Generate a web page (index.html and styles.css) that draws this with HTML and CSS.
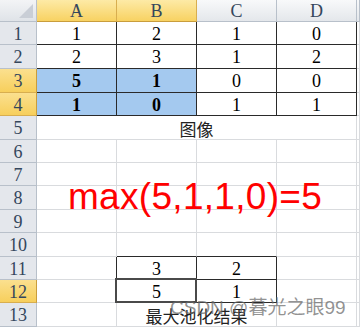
FILE: index.html
```html
<!DOCTYPE html>
<html lang="zh">
<head>
<meta charset="utf-8">
<title>Sheet</title>
<link rel="stylesheet" href="styles.css">
</head>
<body>
<div class="sheet">
  <div class="corner"><svg class="tri" width="14" height="14" viewBox="0 0 14 14"><polygon points="14,0 14,14 0,14" fill="#c9ced6"/></svg></div>
  <div class="h hs">A</div>
  <div class="h hs">B</div>
  <div class="h">C</div>
  <div class="h">D</div>
  <div class="h"></div>

  <div class="r">1</div>
  <div class="c bk">1</div><div class="c bk">2</div><div class="c bk">1</div><div class="c bk">0</div><div class="c"></div>

  <div class="r">2</div>
  <div class="c bk">2</div><div class="c bk">3</div><div class="c bk">1</div><div class="c bk">2</div><div class="c"></div>

  <div class="r rs">3</div>
  <div class="c bk sel">5</div><div class="c bk sel">1</div><div class="c bk">0</div><div class="c bk">0</div><div class="c"></div>

  <div class="r rs">4</div>
  <div class="c bk sel">1</div><div class="c bk sel">0</div><div class="c bk">1</div><div class="c bk">1</div><div class="c"></div>

  <div class="r">5</div>
  <div class="c span4 cjk">图像</div><div class="c"></div>

  <div class="r">6</div>
  <div class="c"></div><div class="c"></div><div class="c"></div><div class="c"></div><div class="c"></div>

  <div class="r">7</div>
  <div class="c"></div><div class="c"></div><div class="c"></div><div class="c"></div><div class="c"></div>

  <div class="r">8</div>
  <div class="c"></div><div class="c"></div><div class="c"></div><div class="c"></div><div class="c"></div>

  <div class="r">9</div>
  <div class="c"></div><div class="c"></div><div class="c"></div><div class="c"></div><div class="c"></div>

  <div class="r">10</div>
  <div class="c"></div><div class="c bb"></div><div class="c bb"></div><div class="c"></div><div class="c"></div>

  <div class="r">11</div>
  <div class="c br"></div><div class="c bk">3</div><div class="c bk">2</div><div class="c"></div><div class="c"></div>

  <div class="r rs">12</div>
  <div class="c br"></div><div class="c bk active">5</div><div class="c bk">1</div><div class="c"></div><div class="c"></div>

  <div class="r">13</div>
  <div class="c"></div><div class="c span2 cjk">最大池化结果</div><div class="c"></div><div class="c"></div>
</div>

<div class="formula">max(5,1,1,0)=5</div>
<div class="watermark">CSDN @暮光之眼99</div>
</body>
</html>
```

FILE: styles.css
```css
html, body {
  margin: 0;
  padding: 0;
}

body {
  width: 360px;
  height: 329px;
  overflow: hidden;
  background: #ffffff;
  position: relative;
}

.sheet {
  width: 360px;
  overflow: hidden;
  display: grid;
  grid-template-columns: 37px 80px 80px 80px 80px 1fr;
  grid-template-rows: 22px 23px 24px 24px 23px 24px 23px 23px 24px 23px 24px 23px 23px 24px;
  font-family: "Liberation Serif", "Noto Sans CJK SC", serif;
  font-size: 18px;
  color: #000;
}

.sheet > div {
  box-sizing: border-box;
  border-right: 1px solid #d9dbde;
  border-bottom: 1px solid #d9dbde;
  display: flex;
  align-items: center;
  justify-content: center;
  line-height: 1;
  padding-top: 1px;
  min-width: 0;
}

.corner {
  background: linear-gradient(#f3f4f6, #dfe3e8);
  justify-content: flex-end !important;
  align-items: flex-end !important;
  padding: 0 3px 3px 0 !important;
}

.sheet > .corner,
.sheet > .h,
.sheet > .r {
  border-right-color: #b8c0ca;
  border-bottom-color: #b8c0ca;
}

.h {
  background: linear-gradient(#f8f9fa, #e4e7eb);
  color: #34465c;
}

.sheet > .hs {
  background: linear-gradient(#fdeaa6, #f8d262);
  border-right-color: #d8ae4f;
  border-bottom-color: #c99d3c;
  color: #34465c;
}

.r {
  background: #e4e7ec;
  color: #34465c;
}

.sheet > .rs {
  background: linear-gradient(#fbe08f, #f7cf5c);
  border-right-color: #c99d3c;
  border-bottom-color: #d8ae4f;
}

.sheet > .bk {
  border-right-color: #2a2a2a;
  border-bottom-color: #2a2a2a;
}

.sheet > .br {
  border-right-color: #2a2a2a;
}

.sheet > .bb {
  border-bottom-color: #2a2a2a;
}

.sel {
  background: #a4c9ef;
  font-weight: bold;
}

.span4 {
  grid-column: span 4;
}

.span2 {
  grid-column: span 2;
}

.cjk {
  font-family: "Noto Sans CJK SC", sans-serif;
  font-size: 17px;
  color: #222;
}

.active {
  position: relative;
}

.active::after {
  content: "";
  position: absolute;
  left: -2px;
  top: -2px;
  right: -1px;
  bottom: -1px;
  border: 2px solid #4a4a4a;
  box-shadow: inset 0 0 0 1px #ffffff;
}

.formula {
  position: absolute;
  left: 68px;
  top: 178px;
  font-family: "Liberation Sans", sans-serif;
  font-size: 37px;
  line-height: 37px;
  color: #ff0000;
  white-space: nowrap;
  letter-spacing: 0.3px;
}

.watermark {
  position: absolute;
  left: 170px;
  top: 297px;
  font-family: "Liberation Sans", "Noto Sans CJK SC", sans-serif;
  font-size: 19px;
  line-height: 22px;
  color: rgba(105, 105, 105, 0.72);
  white-space: nowrap;
}
```
